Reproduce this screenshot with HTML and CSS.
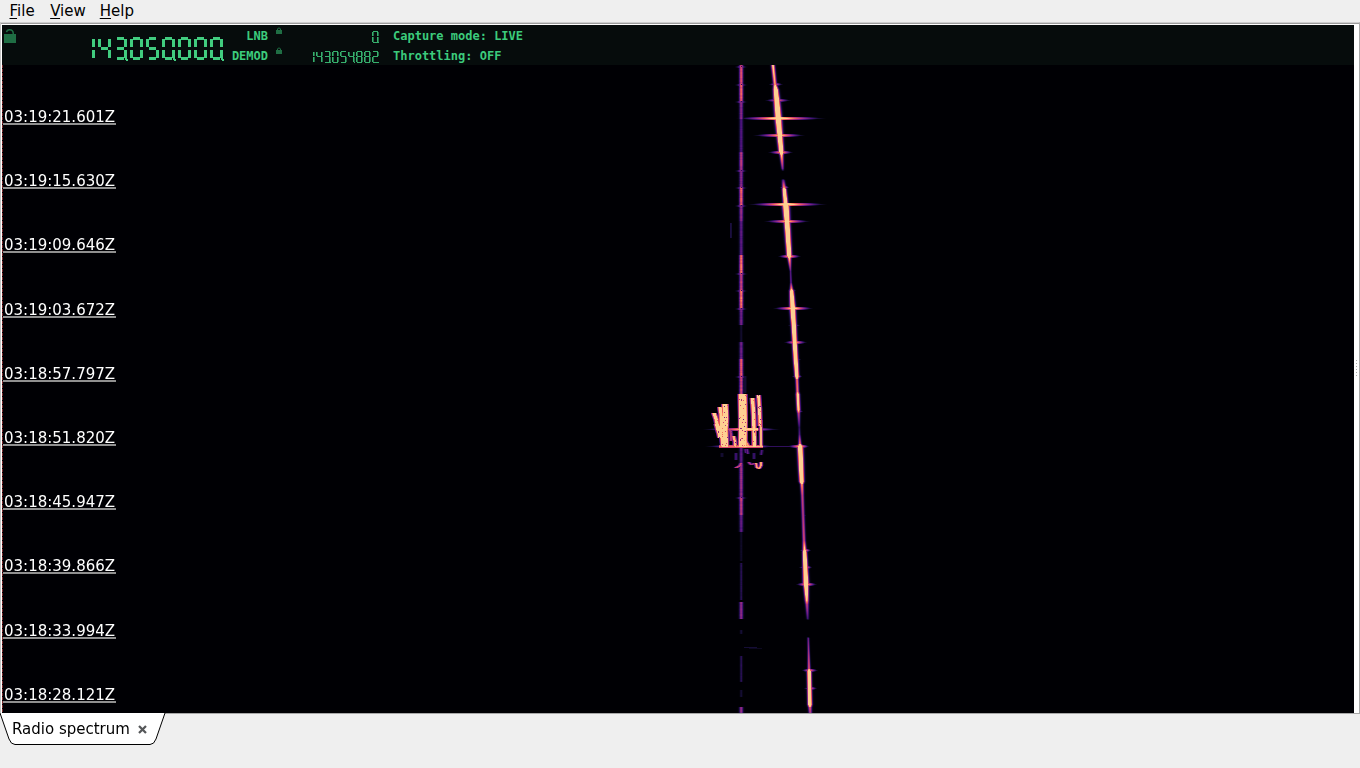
FILE: index.html
```
<!DOCTYPE html>
<html lang="en">
<head>
  <meta charset="UTF-8" />
  <meta name="viewport" content="width=device-width, initial-scale=1.0" />
  <title>Radio spectrum</title>
  <link rel="stylesheet" href="styles.css">
</head>
<body>

  <nav class="menubar">
    <span><u>F</u>ile</span>
    <span><u>V</u>iew</span>
    <span><u>H</u>elp</span>
  </nav>

  <main class="frame">
    <div class="spectrum">
      <header class="lcd">
        <svg class="lock-big" viewBox="0 0 12 14"><path d="M0 5h12v9H0z" fill="#1f6e44"/><path d="M2.5 3.2Q3 .8 5.5 .8Q9.3 .8 9.3 5" fill="none" stroke="#1f6e44" stroke-width="1.5"/></svg>
        <div class="display main-freq" data-value="143.050.000." role="img" aria-label="143.050.000"></div>
        <div class="labels">
          <span>LNB</span>
          <span>DEMOD</span>
        </div>
        <div class="locks">
          <svg viewBox="0 0 6 7"><path d="M0 3h6v4H0z" fill="#1f6e44"/><path d="M1.5 3V1.8Q3 0 4.5 1.8V3" fill="none" stroke="#1f6e44"/></svg>
          <svg viewBox="0 0 6 7"><path d="M0 3h6v4H0z" fill="#1f6e44"/><path d="M1.5 3V1.8Q3 0 4.5 1.8V3" fill="none" stroke="#1f6e44"/></svg>
        </div>
        <div class="sub-freqs">
          <div class="display small" data-value="0." role="img" aria-label="0"></div>
          <div class="display small" data-value="143.054.882." role="img" aria-label="143.054.882"></div>
        </div>
        <div class="state">
          <span>Capture mode: LIVE</span>
          <span>Throttling: OFF</span>
        </div>
      </header>

      <div class="waterfall">
        <canvas id="waterfall" width="1352" height="648"></canvas>
        <div class="times">
          <span>03:19:21.601Z</span>
          <span>03:19:15.630Z</span>
          <span>03:19:09.646Z</span>
          <span>03:19:03.672Z</span>
          <span>03:18:57.797Z</span>
          <span>03:18:51.820Z</span>
          <span>03:18:45.947Z</span>
          <span>03:18:39.866Z</span>
          <span>03:18:33.994Z</span>
          <span>03:18:28.121Z</span>
        </div>
      </div>
    </div>
    <div class="splitter"><div class="grip"></div></div>
  </main>

  <footer class="tabs">
    <div class="tab">
      <svg class="tab-shape" viewBox="0 0 166 32"><path d="M0 0L9 26Q11 31.5 15 31.5H150Q154 31.5 156 26L165 0" fill="#fff" stroke="#000"/></svg>
      <span class="tab-label">Radio spectrum</span>
      <svg class="close" viewBox="0 0 8 8"><path d="M.9 .9l6.2 6.2M7.1 .9L.9 7.1" stroke="#555759" stroke-width="2"/></svg>
    </div>
  </footer>

  <script src="script.js"></script>
</body>
</html>
```
FILE: styles.css
```
* {
  box-sizing: border-box;
  margin: 0;
  padding: 0;
}

body {
  width: 1360px;
  height: 768px;
  overflow: hidden;
  display: flex;
  flex-direction: column;
  background: #efefef;
  color: #000;
  font-family: 'DejaVu Sans', sans-serif;
  font-size: 15px;
}

.menubar {
  height: 22px;
  display: flex;
  gap: 14px;
  padding-left: 9.5px;
  line-height: 23px;
}

.menubar span:first-child {
  margin-right: 1.5px;
}

.menubar u {
  text-underline-offset: 2px;
}

.frame {
  height: 692px;
  display: flex;
  background: #fff;
  border-top: 1px solid #cfcfcf;
  border-bottom: 1px solid #a8a8a8;
  border-left: 1px solid #c4c4c4;
  border-right: 1px solid #aaa;
  padding-left: 1px;
  box-shadow: inset 0 1px #9c9c9c;
}

.spectrum {
  width: 1352px;
  padding-top: 2px;
}

.lcd {
  height: 40px;
  display: flex;
  background: #060c0c;
  color: #3ccb7c;
  font: bold 12px/20px 'DejaVu Sans Mono', monospace;
}

.lock-big {
  width: 12px;
  height: 14px;
  margin: 4px 0 0 2px;
}

.display {
  display: flex;
  --on: #41cc7f;
}

.main-freq {
  margin: 12px 0 0 66px;
  width: 144px;
  gap: 3px;
}

/* one digit = seven flat bars, each switched on by the script */
.digit {
  position: relative;
  flex: none;
  width: 13px;
  height: 24px;
  background:
    linear-gradient(var(--a, transparent) 0 0) 3px 0 / 7px 3px,
    linear-gradient(var(--b, transparent) 0 0) 10px 2px / 3px 8px,
    linear-gradient(var(--c, transparent) 0 0) 10px 13px / 3px 8px,
    linear-gradient(var(--d, transparent) 0 0) 3px 20px / 7px 3px,
    linear-gradient(var(--e, transparent) 0 0) 0 13px / 3px 8px,
    linear-gradient(var(--f, transparent) 0 0) 0 2px / 3px 8px,
    linear-gradient(var(--g, transparent) 0 0) 3px 10px / 7px 3px;
  background-repeat: no-repeat;
}

.digit.dot::after {
  content: "";
  position: absolute;
  left: 11px;
  top: 21px;
  width: 3px;
  height: 3px;
  background: var(--on);
  clip-path: polygon(0 0, 67% 0, 67% 34%, 100% 34%, 100% 100%, 34% 100%, 34% 67%, 0 67%);
}

.small {
  height: 20px;
  gap: 1px;
  justify-content: flex-end;
  --on: #36b06d;
}

.small .digit {
  width: 7px;
  height: 12px;
  background:
    linear-gradient(var(--a, transparent) 0 0) 1px 0 / 5px 1px,
    linear-gradient(var(--b, transparent) 0 0) 5.4px 1px / 1.6px 4px,
    linear-gradient(var(--c, transparent) 0 0) 5.4px 6px / 1.6px 5px,
    linear-gradient(var(--d, transparent) 0 0) 1px 11px / 5px 1px,
    linear-gradient(var(--e, transparent) 0 0) 0 6px / 1.6px 5px,
    linear-gradient(var(--f, transparent) 0 0) 0 1px / 1.6px 4px,
    linear-gradient(var(--g, transparent) 0 0) 1px 5px / 5px 1px;
  background-repeat: no-repeat;
}

.small .digit.dot::after {
  left: 6px;
  top: 11px;
  width: 1px;
  height: 1px;
  clip-path: none;
}

.labels {
  width: 42px;
  display: flex;
  flex-direction: column;
  text-align: right;
}

.locks {
  width: 22px;
  padding: 2px 0 0 8px;
  display: flex;
  flex-direction: column;
  gap: 13px;
}

.locks svg {
  width: 6px;
  height: 7px;
}

.sub-freqs {
  width: 89px;
  padding-top: 6px;
}

.state {
  padding-left: 14px;
  display: flex;
  flex-direction: column;
}

.labels,
.state {
  margin-top: 1px;
}

.waterfall {
  position: relative;
  height: 648px;
  background: #000004;
}

.waterfall canvas {
  display: block;
}

.times {
  position: absolute;
  left: 1px;
  top: 42px;
  color: #fff;
}

.times span {
  display: block;
  width: 112.5px;
  height: 18px;
  margin-bottom: 46.2px;
  line-height: 20px;
  padding-left: 1px;
  border-bottom: 2px solid #909090;
}

.splitter {
  flex: 1;
  display: flex;
  align-items: center;
  justify-content: center;
}

.grip {
  width: 1px;
  height: 18px;
  margin-top: 2px;
  background: repeating-linear-gradient(#aaa 0 1px, #fff 1px 3px);
}

.tabs {
  height: 54px;
}

.tab {
  position: relative;
  width: 166px;
  height: 31px;
  display: flex;
  align-items: center;
  padding-left: 12px;
  margin-top: -1px;
}

.tab-shape {
  position: absolute;
  left: 0;
  top: 0;
  width: 166px;
  height: 32px;
}

.tab-label,
.close {
  position: relative;
}

.close {
  width: 9px;
  height: 9px;
  margin: 1px 0 0 8.5px;
}
```
FILE: script.js
```
// ---- LCD digits ----
const SEGMENTS = {
  0: 'abcdef', 1: 'bc', 2: 'abged', 3: 'abgcd', 4: 'fgbc',
  5: 'afgcd', 8: 'abcdefg'
};

document.querySelectorAll('.display').forEach(display => {
  for (const ch of display.dataset.value) {
    if (ch === '.') {
      display.lastChild.classList.add('dot');
      continue;
    }
    const digit = document.createElement('div');
    digit.className = 'digit';
    for (const s of SEGMENTS[ch]) digit.style.setProperty('--' + s, 'var(--on)');
    display.appendChild(digit);
  }
});

// ---- Waterfall ----
const X0 = 2, Y0 = 65;   // window position of the canvas
const canvas = document.getElementById('waterfall');
const ctx = canvas.getContext('2d');
const W = canvas.width, H = canvas.height;
const power = new Float32Array(W * H);

const palette = [
  [0, 0, 4], [22, 14, 56], [66, 15, 117], [114, 31, 129], [159, 47, 127],
  [205, 64, 113], [241, 96, 93], [253, 149, 103], [254, 207, 146]
];

let seed = 7;
function rnd() {
  seed = (seed * 16807) % 2147483647;
  return seed / 2147483647;
}

function add(x, y, v) {
  x -= X0; y -= Y0;
  if (x < 0 || y < 0 || x >= W || y >= H) return;
  const i = y * W + x;
  if (v > power[i]) power[i] = v;
}

function lerpTable(table, y, col) {
  for (let i = 1; i < table.length; i++) {
    if (y <= table[i][0]) {
      const a = table[i - 1], b = table[i];
      return a[col] + (b[col] - a[col]) * (y - a[0]) / (b[0] - a[0]);
    }
  }
  return table[table.length - 1][col];
}

function spot(cx, y, v, w) {
  for (let x = Math.floor(cx - 6); x <= cx + 6; x++) {
    const d = (x + 0.5 - cx) / w;
    add(x, y, v * Math.exp(-d * d));
  }
}

// y, x, level, width
const trail = [
  [65, 773, 1.05, 1.7], [84, 775, .9, 1.7], [89, 775.8, 1.6, 2.3], [100, 776.8, 1.8, 2.6],
  [118, 778.3, 1.9, 2.8], [135, 779.8, 1.8, 2.5], [151, 781.2, 1.8, 2.2], [155, 781.6, 1, 1.7],
  [168, 782.6, .4, 1.3], [171, 783, 0, 1], [178, 783, 0, 1], [180, 783.3, .35, 1.6],
  [187, 784, .9, 1.7], [189, 784.3, 1.5, 1.9], [202, 785.5, 1.6, 2.1], [204, 785.8, 1.9, 2.9],
  [222, 787.1, 1.9, 2.5], [255, 789.2, 1.8, 2.2], [258, 789.4, 1, 1.7],
  [267, 790.2, .5, 1.2], [271, 790.6, .3, 1], [282, 791, .35, 1],
  [288, 791.4, .85, 1.5], [291, 791.7, 1.6, 1.9], [308, 792.7, 1.9, 2.4], [325, 793.8, 1.8, 2.2],
  [342, 794.7, 1.8, 2.1], [359, 795.7, 1.7, 2.1], [376, 796.9, 1.6, 1.9], [379, 797, .8, 1.5],
  [391, 797.5, .8, 1.5], [394, 797.8, 1.2, 1.8], [409, 798.5, 1.2, 1.7], [413, 798.7, .6, 1.5],
  [427, 799.3, .2, 1.2], [434, 799.5, .3, 1.2], [443, 799.9, .8, 1.4], [446, 800.2, 1.8, 2.4],
  [465, 801, 1.8, 2.3], [481, 801.7, 1.8, 2.1], [484, 801.9, .9, 1.6], [495, 802.4, .6, 1.5],
  [515, 803.1, .55, 1.5], [540, 804, .65, 1.5], [549, 804.5, 1.1, 1.7], [552, 804.7, 1.7, 1.9],
  [584, 806, 1.9, 2.4], [586, 806.1, 1.7, 2.1], [600, 806.8, 1, 1.8], [604, 807, .6, 1.6],
  [618, 807.7, .25, 1.3], [620, 808, 0, 1],
  [636, 808, 0, 1], [638, 808.3, .35, 1.1], [650, 808.6, .5, 1.1], [668, 809, .7, 1.4],
  [671, 809.2, 1.7, 1.9], [704, 809.9, 1.7, 1.9], [707, 810, .7, 1.7], [713, 810.3, .5, 1.6]
];
for (let y = 65; y < 713; y++) {
  spot(lerpTable(trail, y, 1), y, lerpTable(trail, y, 2), lerpTable(trail, y, 3));
}

// carrier: from, to, level
const carrier = [
  [65, 84, .68], [84, 101, .74], [101, 119, .44], [119, 152, .29], [152, 170, .56],
  [170, 187, .44], [187, 205, .75], [205, 221, .46], [221, 255, .32], [255, 273, .8],
  [273, 290, .62], [290, 308, .82], [308, 325, .38], [325, 342, .1], [342, 359, .36],
  [359, 376, .72], [376, 394, .64], [447, 464, .32], [464, 480, .5], [480, 497, .48],
  [497, 515, .6], [515, 532, .33], [532, 561, .09], [563, 600, .18], [602, 619, .45],
  [630, 634, .12], [656, 682, .19], [690, 697, .12], [707, 713, .45]
];
for (const [from, to, level] of carrier) {
  for (let y = from; y < to; y++) {
    spot(741.2, y, level * (.92 + rnd() * .16), level < .25 ? 1.2 : 1.8);
  }
}
for (const y of [66, 84, 101, 170, 187, 205, 273, 290, 308, 376, 497]) {
  for (const row of [y, y + 1]) spot(741, row, .42, 3.2);
  power[(y - Y0) * W + 741 - X0] = .2;
}

// bursts: y, left, centre, right, level
const bursts = [
  [84, 768, 775, 783, .7], [100, 764, 777, 791, .8], [118, 735, 778, 826, 1.3],
  [135, 752, 780, 805, 1.05], [152, 767, 781, 793, 1], [187, 779, 784, 789, .8],
  [204, 747, 786, 827, 1.3], [221, 763, 787, 810, 1.05], [239, 782, 788, 793, .6],
  [256, 777, 789, 801, 1.05], [290, 787, 791, 796, .7], [308, 772, 793, 813, 1.2],
  [325, 787, 794, 800, .65], [342, 783, 795, 807, 1], [359, 791, 796, 801, .6],
  [376, 791, 797, 802, .85], [411, 795, 799, 803, .5], [446, 786, 800, 809, 1.1],
  [480, 797, 802, 805, .7], [515, 800, 803, 806, .45], [550, 799, 805, 811, .85],
  [567, 798, 806, 812, .85], [584, 795, 806, 817, 1.05], [670, 801, 809, 818, .9],
  [688, 803, 810, 817, .8], [429, 702, 744, 780, 1.1], [446, 704, 744, 775, 1.1]
];
for (const [y, l, c, r, level] of bursts) {
  for (let x = l; x <= r; x++) {
    const t = x < c ? (c - x) / (c - l) : (x - c) / (r - c);
    const v = level * Math.pow(1 - t, 1.35);
    add(x, y, v);
    add(x, y - 1, v * .9 - .1);
    add(x, y + 1, v * .8 - .12);
  }
}
for (let x = 760; x < 796; x++) add(x, 446, .2);
for (let x = 744; x < 757; x++) add(x, 647, .12);
for (let x = 749; x < 762; x++) add(x, 648, .07);
for (let y = 223; y < 238; y++) { add(730, y, .14); add(731, y, .12); }

// meteor echo: x/y pairs, width, level, number of darker specks
function stroke(points, w, level, specks) {
  for (let i = 1; i < points.length; i++) {
    const [xa, ya] = points[i - 1], [xb, yb] = points[i];
    const steps = Math.ceil(Math.hypot(xb - xa, yb - ya) * 2);
    for (let s = 0; s <= steps; s++) {
      const cx = xa + (xb - xa) * s / steps, cy = ya + (yb - ya) * s / steps;
      const y = Math.round(cy);
      for (let x = Math.floor(cx - w - 2); x <= cx + w + 2; x++) {
        const d = Math.abs(x + .5 - cx) - w / 2;
        if (d < 0) add(x, y, level);
        else if (d < 2) add(x, y, level * (.8 - d * .38));
      }
    }
  }
  const [xa, ya] = points[0], [xb, yb] = points[points.length - 1];
  for (let n = 0; n < specks; n++) {
    const t = rnd();
    const x = Math.round(xa + (xb - xa) * t + (rnd() - .5) * w);
    const y = Math.round(ya + (yb - ya) * t);
    power[(y - Y0) * W + x - X0] = .35 + rnd() * .5;
  }
}
stroke([[714, 413], [716, 418], [718, 428], [720, 437]], 2.8, 1.1, 5);
stroke([[720, 407], [721, 413], [721.5, 430], [723, 446]], 2.8, 1.1, 8);
stroke([[725, 404], [725.5, 418], [725, 430], [725.5, 446]], 4.6, 1.15, 14);
stroke([[717, 424], [720, 434]], 4, 1.05, 2);
stroke([[730, 429], [731, 434], [731, 440]], 1.5, .55, 1);
stroke([[733.5, 436], [735, 441], [735, 446]], 2, .95, 3);
stroke([[742.5, 394], [743, 420], [742.7, 446]], 7, 1.2, 32);
stroke([[752.5, 398], [753.7, 415], [754.3, 446]], 2.8, 1.1, 7);
stroke([[758.5, 395], [759.5, 408], [760, 425]], 2.4, 1.05, 8);
stroke([[760.8, 420], [761, 446]], 1.3, .95, 2);
for (let x = 746; x < 758; x++) { add(x, 428, .95); add(x, 429, 1.1); add(x, 430, .8); }
for (let x = 719; x < 763; x++) { add(x, 445, .65); add(x, 446, x > 738 ? .95 : .8); add(x, 447, .65); }
stroke([[745, 440], [748, 445]], 2, .9, 0);
stroke([[747, 449], [748, 453]], .8, .35, 0);
stroke([[736, 453], [736, 459]], .8, .3, 0);
stroke([[754, 453], [754, 458]], .8, .28, 0);
stroke([[745, 449], [746, 452]], .8, .3, 0);
stroke([[762, 450], [761, 454]], .8, .28, 0);
stroke([[736, 467], [739, 466], [741, 463]], 1.2, .6, 0);
stroke([[749, 462], [751, 464], [755, 463]], 1.2, .5, 0);
stroke([[756, 463], [757, 467], [759, 468], [761, 465], [761, 462]], 1.2, .9, 0);
stroke([[722, 453], [722, 456]], .5, .15, 0);
stroke([[745, 376], [745, 392]], .4, .16, 0);

const image = ctx.createImageData(W, H);
for (let i = 0; i < W * H; i++) {
  const p = Math.min(1, Math.max(0, power[i])) * 8;
  const k = Math.min(7, Math.floor(p)), f = p - k;
  for (let c = 0; c < 3; c++) {
    image.data[i * 4 + c] = palette[k][c] + (palette[k + 1][c] - palette[k][c]) * f;
  }
  image.data[i * 4 + 3] = 255;
}
ctx.putImageData(image, 0, 0);

// dashed edge of the frequency axis
ctx.fillStyle = '#7c2b2e';
for (let y = 0; y < H; y += 4) ctx.fillRect(0, y, 1, 3);
```
